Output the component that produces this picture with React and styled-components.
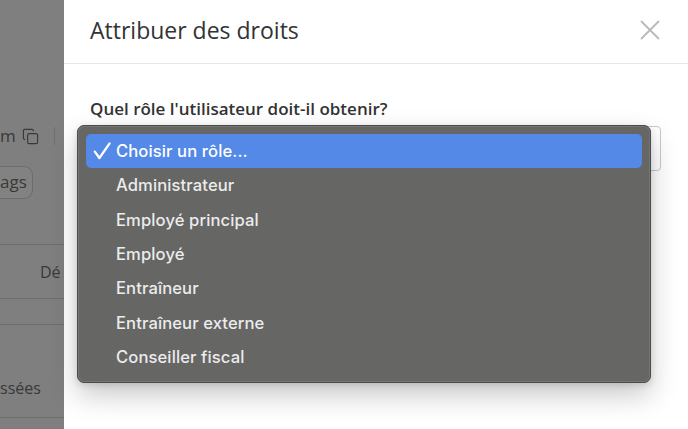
import React from "react";
import styled, { createGlobalStyle } from "styled-components";
import { Copy } from "lucide-react";

const roles = [
  "Choisir un rôle...",
  "Administrateur",
  "Employé principal",
  "Employé",
  "Entraîneur",
  "Entraîneur externe",
  "Conseiller fiscal",
];

const App = () => {
  return (
    <>
      <GlobalStyle />
      <Page>
        <Backdrop>
          <ToolRow>
            <span>m</span>
            <Copy size={17} strokeWidth={1.6} style={{ marginLeft: 6 }} />
            <ToolSep />
          </ToolRow>
          <TagPill>ags</TagPill>
          <Line $top={45} />
          <BackRow $height={53} $pad={40}>
            Dé
          </BackRow>
          <Line />
          <BackRow $height={25} />
          <Line />
          <BackRow $height={92} $pad={0} $align="flex-end" $bottom={18}>
            ssées
          </BackRow>
          <Line />
        </Backdrop>

        <Modal>
          <Header>
            <Title>Attribuer des droits</Title>
            <CloseButton aria-label="Fermer">
              <svg width="20" height="20" viewBox="0 0 20 20">
                <path
                  d="M1.5 1.5 L18.5 18.5 M18.5 1.5 L1.5 18.5"
                  stroke="#b9b9b9"
                  strokeWidth="1.8"
                  strokeLinecap="round"
                  fill="none"
                />
              </svg>
            </CloseButton>
          </Header>

          <Body>
            <Label>Quel rôle l'utilisateur doit-il obtenir?</Label>
            <SelectWrap>
              <SelectBox />
              <Menu>
                {roles.map((role, i) => (
                  <MenuItem key={role} $active={i === 0}>
                    <CheckSlot>
                      {i === 0 && (
                        <svg width="18" height="18" viewBox="0 0 18 18">
                          <path
                            d="M1.8 9.6 L6.4 16 L16.6 1.4"
                            stroke="#fff"
                            strokeWidth="2.3"
                            strokeLinecap="round"
                            strokeLinejoin="round"
                            fill="none"
                          />
                        </svg>
                      )}
                    </CheckSlot>
                    {role}
                  </MenuItem>
                ))}
              </Menu>
            </SelectWrap>
          </Body>
        </Modal>
      </Page>
    </>
  );
};

export default App;

// styles
const GlobalStyle = createGlobalStyle`
  html, body {
    margin: 0;
    padding: 0;
    height: 100%;
  }
  body {
    font-family: "Open Sans", "Liberation Sans", sans-serif;
    background: #fff;
    overflow: hidden;
  }
`;

const Page = styled.div`
  display: flex;
  width: 688px;
  height: 429px;
  overflow: hidden;
`;

const Backdrop = styled.div`
  width: 64px;
  flex-shrink: 0;
  display: flex;
  flex-direction: column;
  background: #7f7f7f;
  color: #393939;
  font-size: 17px;
  overflow: hidden;
  white-space: nowrap;
`;

const ToolRow = styled.div`
  display: flex;
  align-items: center;
  height: 20px;
  margin-top: 126px;
  line-height: 20px;
`;

const ToolSep = styled.div`
  width: 1px;
  height: 18px;
  margin-left: 15px;
  background: #6f6f6f;
`;

const TagPill = styled.div`
  display: flex;
  align-items: center;
  width: 33px;
  height: 33px;
  margin-top: 20px;
  box-sizing: border-box;
  border: 1px solid #6c6c6c;
  border-left: none;
  border-radius: 0 9px 9px 0;
  background: #828282;
  line-height: 1;
  padding-bottom: 2px;
`;

const Line = styled.div`
  height: 1px;
  flex-shrink: 0;
  margin-top: ${(props) => props.$top || 0}px;
  background: #6e6e6e;
`;

const BackRow = styled.div`
  display: flex;
  align-items: ${(props) => props.$align || "center"};
  height: ${(props) => props.$height}px;
  padding-left: ${(props) => props.$pad || 0}px;
  padding-bottom: ${(props) => props.$bottom || 0}px;
  box-sizing: border-box;
  flex-shrink: 0;
  font-size: 16px;
`;

const Modal = styled.div`
  flex: 1;
  display: flex;
  flex-direction: column;
  background: #fff;
`;

const Header = styled.div`
  display: flex;
  align-items: center;
  justify-content: space-between;
  height: 64px;
  box-sizing: border-box;
  padding: 0 28px 3px 26px;
  border-bottom: 1px solid #e7e7e7;
`;

const Title = styled.h2`
  margin: 0;
  font-size: 23px;
  font-weight: 400;
  color: #333;
`;

const CloseButton = styled.button`
  display: flex;
  padding: 0;
  border: none;
  background: none;
  cursor: pointer;
`;

const Body = styled.div`
  padding: 34px 27px 0 26px;
`;

const Label = styled.div`
  font-size: 17px;
  font-weight: 600;
  line-height: 22px;
  color: #333;
`;

const SelectWrap = styled.div`
  position: relative;
  margin-top: 6px;
`;

const SelectBox = styled.div`
  height: 45px;
  box-sizing: border-box;
  border: 1px solid #c9c9c9;
  border-radius: 4px;
  background: #fff;
`;

const Menu = styled.div`
  position: absolute;
  top: -1px;
  left: -13px;
  width: 574px;
  box-sizing: border-box;
  padding: 8px;
  background: #666665;
  border: 1px solid #4b4b4b;
  border-radius: 7px;
  box-shadow: inset 0 0 0 1px rgba(255, 255, 255, 0.1),
    0 12px 28px rgba(0, 0, 0, 0.22), 0 2px 6px rgba(0, 0, 0, 0.12);
  font-family: Inter, "Liberation Sans", sans-serif;
`;

const MenuItem = styled.div`
  display: flex;
  align-items: center;
  height: 34.3px;
  border-radius: 5px;
  background: ${(props) => (props.$active ? "#5489e7" : "transparent")};
  color: ${(props) => (props.$active ? "#fff" : "#ececec")};
  font-size: 16.6px;
  font-weight: 500;
  letter-spacing: 0.1px;
`;

const CheckSlot = styled.span`
  display: flex;
  align-items: center;
  width: 30px;
  padding-left: 7px;
  box-sizing: border-box;
  flex-shrink: 0;
`;
